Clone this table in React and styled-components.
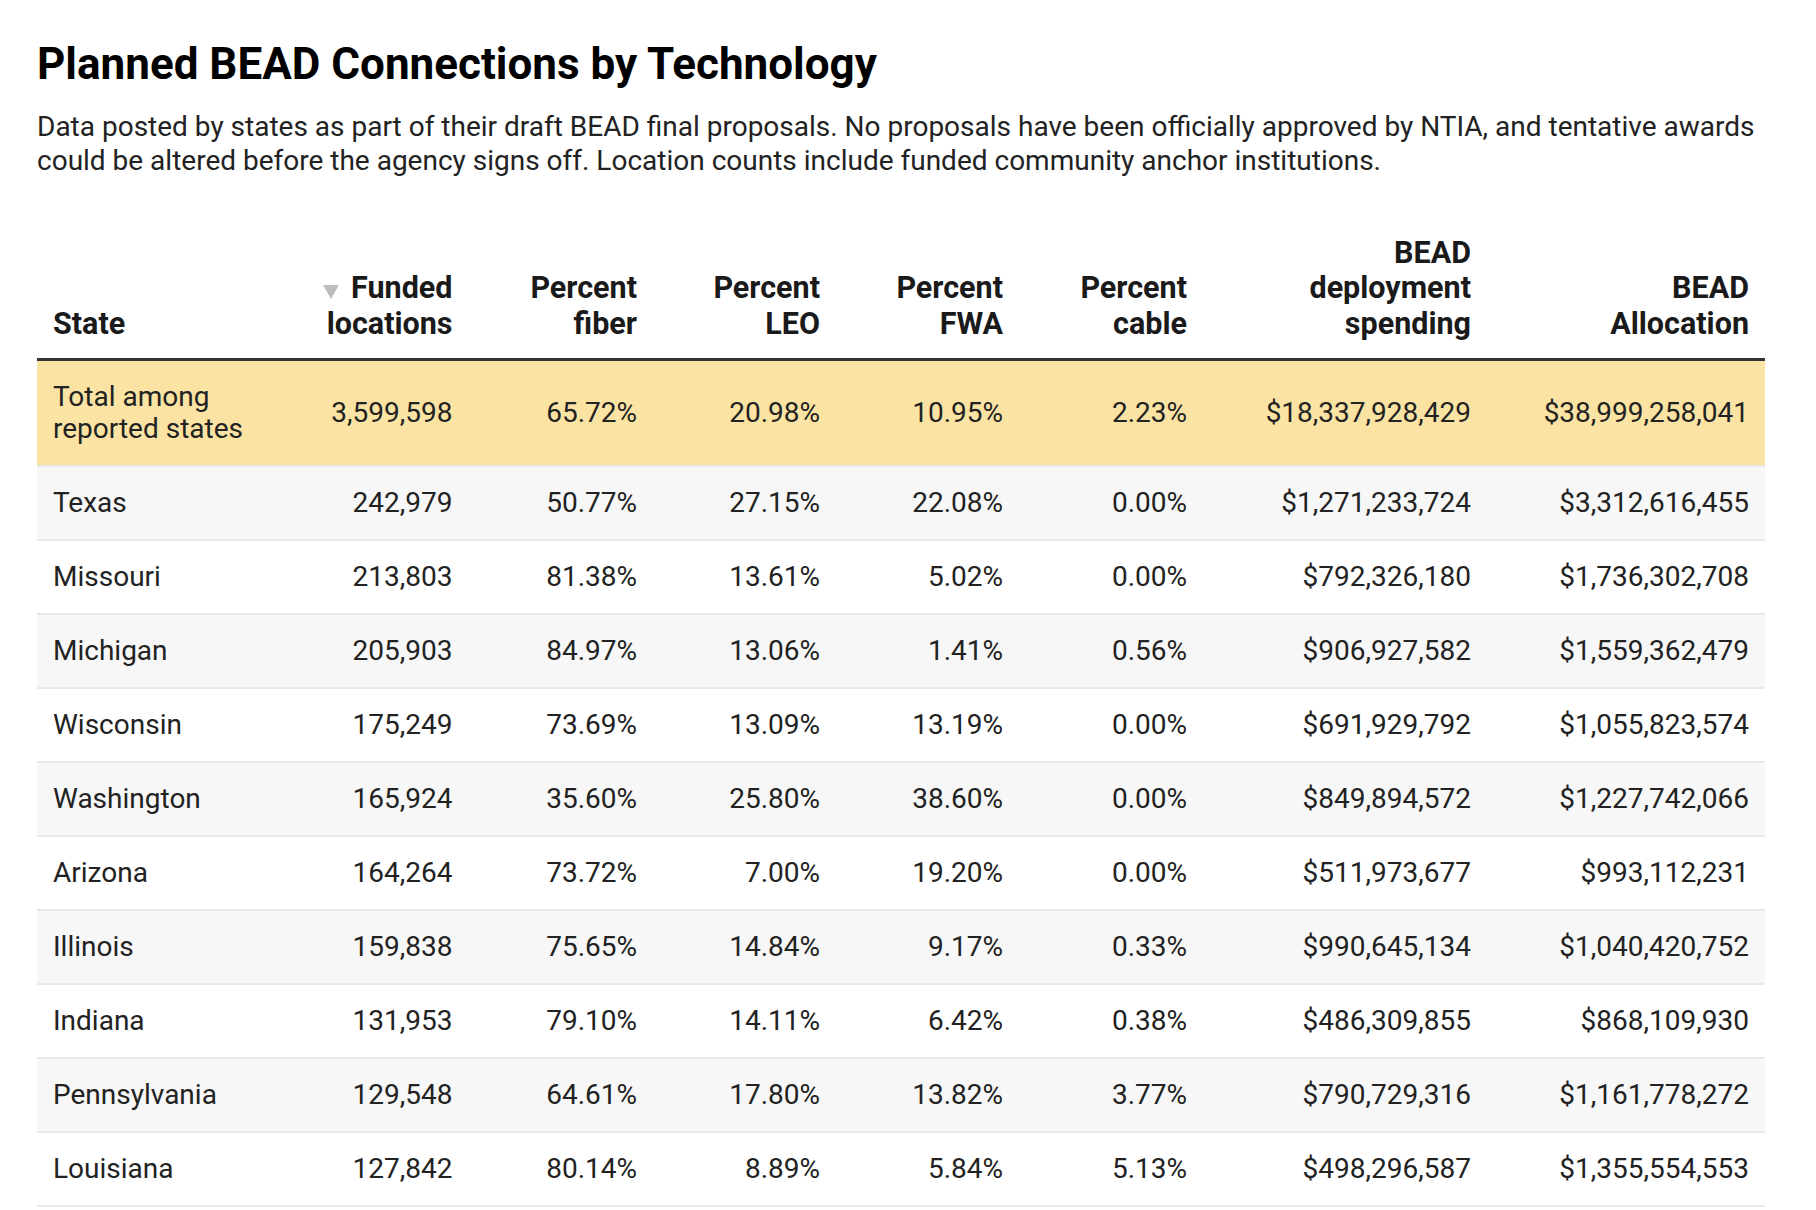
import React from 'react';
import styled, { createGlobalStyle } from 'styled-components';

const GlobalStyle = createGlobalStyle`
    html, body {
        margin: 0;
        padding: 0;
        background: #fff;
    }
    body {
        font-family: Roboto, 'Liberation Sans', Arial, sans-serif;
        color: #222;
    }
`

/* ------------------------------------------------------------------------------- */
/* Page + heading */

const Page = styled.main`
    width: 1728px;
    padding: 39px 0 0 37px;
`

const Title = styled.h1`
    margin: 0;
    font-size: 44px;
    line-height: 51.6px;
    font-weight: 700;
    color: #000;
`

const Dek = styled.p`
    margin: 19px 0 0;
    font-size: 28px;
    line-height: 34px;
    color: #222;
`

/* ------------------------------------------------------------------------------- */
/* Table */

const Table = styled.table`
    margin-top: 57px;
    width: 1728px;
    table-layout: fixed;
    border-collapse: separate;
    border-spacing: 0;
    font-size: 28px;
`

const Th = styled.th`
    padding: 0 16px 17px;
    vertical-align: bottom;
    text-align: ${({ $left }) => ($left ? 'left' : 'right')};
    font-size: 30.5px;
    font-weight: 700;
    line-height: 35.5px;
    color: #1a1a1a;
    border-bottom: 3px solid #333;
`

const SortArrow = styled.span`
    display: inline-block;
    width: 0;
    height: 0;
    margin-right: 12px;
    border-left: 8px solid transparent;
    border-right: 8px solid transparent;
    border-top: 14px solid #bdbdbd;
    vertical-align: -1px;
`

const Row = styled.tr`
    background: ${({ $total, $shade }) => ($total ? '#fbe4a3' : $shade ? '#f7f7f7' : '#fff')};
`

const Td = styled.td`
    padding: 20px 16px;
    line-height: 32px;
    vertical-align: middle;
    text-align: ${({ $left }) => ($left ? 'left' : 'right')};
    color: #222;
    border-bottom: 2px solid #e9e9e9;
`

const columns = [
    { w: 248, label: <>State</>, left: true },
    { w: 183.5, label: <><SortArrow />Funded<br />locations</> },
    { w: 184.5, label: <>Percent<br />fiber</> },
    { w: 183, label: <>Percent<br />LEO</> },
    { w: 183, label: <>Percent<br />FWA</> },
    { w: 184, label: <>Percent<br />cable</> },
    { w: 284, label: <>BEAD<br />deployment<br />spending</> },
    { w: 278, label: <>BEAD<br />Allocation</> },
]

const total = [<>Total among<br />reported states</>, '3,599,598', '65.72%', '20.98%', '10.95%', '2.23%', '$18,337,928,429', '$38,999,258,041']

const rows = [
    ['Texas', '242,979', '50.77%', '27.15%', '22.08%', '0.00%', '$1,271,233,724', '$3,312,616,455'],
    ['Missouri', '213,803', '81.38%', '13.61%', '5.02%', '0.00%', '$792,326,180', '$1,736,302,708'],
    ['Michigan', '205,903', '84.97%', '13.06%', '1.41%', '0.56%', '$906,927,582', '$1,559,362,479'],
    ['Wisconsin', '175,249', '73.69%', '13.09%', '13.19%', '0.00%', '$691,929,792', '$1,055,823,574'],
    ['Washington', '165,924', '35.60%', '25.80%', '38.60%', '0.00%', '$849,894,572', '$1,227,742,066'],
    ['Arizona', '164,264', '73.72%', '7.00%', '19.20%', '0.00%', '$511,973,677', '$993,112,231'],
    ['Illinois', '159,838', '75.65%', '14.84%', '9.17%', '0.33%', '$990,645,134', '$1,040,420,752'],
    ['Indiana', '131,953', '79.10%', '14.11%', '6.42%', '0.38%', '$486,309,855', '$868,109,930'],
    ['Pennsylvania', '129,548', '64.61%', '17.80%', '13.82%', '3.77%', '$790,729,316', '$1,161,778,272'],
    ['Louisiana', '127,842', '80.14%', '8.89%', '5.84%', '5.13%', '$498,296,587', '$1,355,554,553'],
]

export default function App() {
    return (
        <>
            <GlobalStyle />
            <Page>
                <Title>Planned BEAD Connections by Technology</Title>
                <Dek>
                    Data posted by states as part of their draft BEAD final proposals. No proposals have been
                    officially approved by NTIA, and tentative awards could be altered before the agency signs
                    off. Location counts include funded community anchor institutions.
                </Dek>
                <Table>
                    <colgroup>
                        {columns.map((c, i) => <col key={i} style={{ width: c.w }} />)}
                    </colgroup>
                    <thead>
                        <tr>
                            {columns.map((c, i) => <Th key={i} $left={c.left}>{c.label}</Th>)}
                        </tr>
                    </thead>
                    <tbody>
                        <Row $total>
                            {total.map((v, i) => <Td key={i} $left={i === 0}>{v}</Td>)}
                        </Row>
                        {rows.map((r, n) => (
                            <Row key={r[0]} $shade={n % 2 === 0}>
                                {r.map((v, i) => <Td key={i} $left={i === 0}>{v}</Td>)}
                            </Row>
                        ))}
                    </tbody>
                </Table>
            </Page>
        </>
    );
}
